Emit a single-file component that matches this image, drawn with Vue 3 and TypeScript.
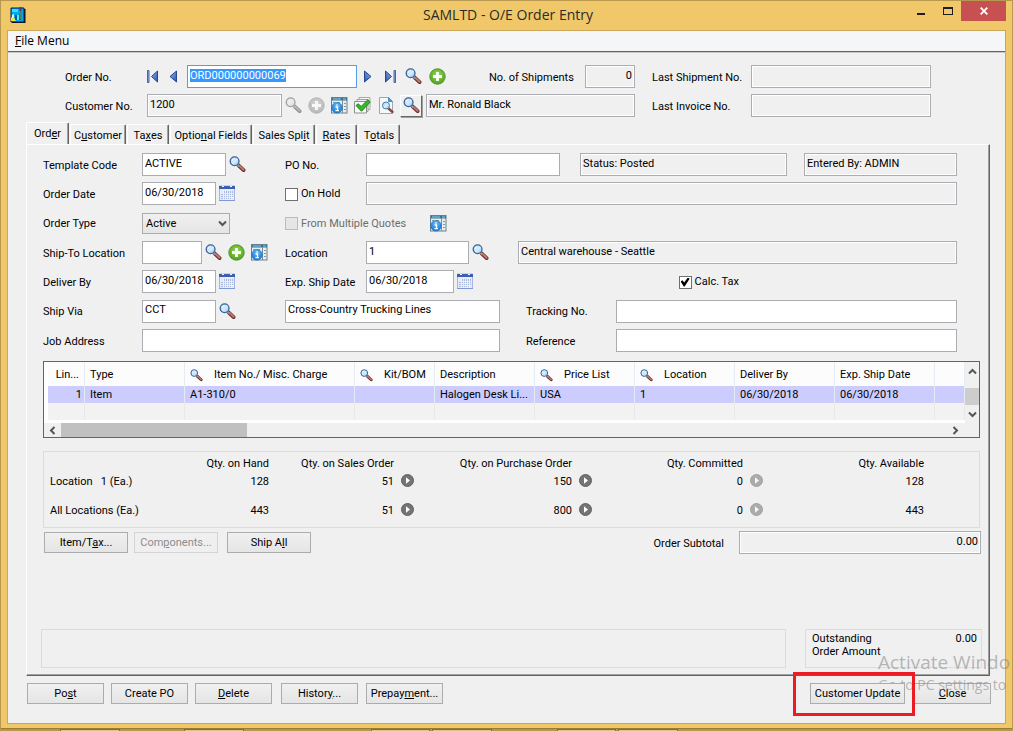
<script setup lang="ts">
import { onMounted, reactive, ref } from 'vue'

interface Tab {
  id: string
  pre: string
  key: string
  post: string
}

interface Column {
  title: string
  value: string
  width: string
  finder?: boolean
  align?: 'right'
}

interface QtyRow {
  label: string
  hand: string
  sales: string
  purchase: string
  committed: string
  available: string
}

const order = reactive({
  number: 'ORD000000000069',
  customer: '1200',
  customerName: 'Mr. Ronald Black',
  shipments: '0',
  lastShipment: '',
  lastInvoice: '',
  template: 'ACTIVE',
  po: '',
  status: 'Status: Posted',
  enteredBy: 'Entered By: ADMIN',
  date: '06/30/2018',
  onHold: false,
  holdReason: '',
  type: 'Active',
  multiQuotes: false,
  shipTo: '',
  location: '1',
  locationName: 'Central warehouse - Seattle',
  deliverBy: '06/30/2018',
  expShip: '06/30/2018',
  calcTax: true,
  shipVia: 'CCT',
  shipViaName: 'Cross-Country Trucking Lines',
  tracking: '',
  jobAddress: '',
  reference: '',
  subtotal: '0.00',
})

const tabs: Tab[] = [
  { id: 'order', pre: 'Ord', key: 'e', post: 'r' },
  { id: 'customer', pre: 'C', key: 'u', post: 'stomer' },
  { id: 'taxes', pre: 'Ta', key: 'x', post: 'es' },
  { id: 'optional', pre: 'Optio', key: 'n', post: 'al Fields' },
  { id: 'split', pre: 'Sales Spl', key: 'i', post: 't' },
  { id: 'rates', pre: '', key: 'R', post: 'ates' },
  { id: 'totals', pre: 'T', key: 'o', post: 'tals' },
]
const activeTab = ref('order')

const columns: Column[] = [
  { title: 'Lin...', value: '1', width: 'w-line', align: 'right' },
  { title: 'Type', value: 'Item', width: 'w-std' },
  { title: 'Item No./ Misc. Charge', value: 'A1-310/0', width: 'w-item', finder: true },
  { title: 'Kit/BOM', value: '', width: 'w-kit', finder: true },
  { title: 'Description', value: 'Halogen Desk Li...', width: 'w-std' },
  { title: 'Price List', value: 'USA', width: 'w-std', finder: true },
  { title: 'Location', value: '1', width: 'w-std', finder: true },
  { title: 'Deliver By', value: '06/30/2018', width: 'w-std' },
  { title: 'Exp. Ship Date', value: '06/30/2018', width: 'w-std' },
  { title: '', value: '', width: 'w-rest' },
]

const quantities: QtyRow[] = [
  { label: 'Location\u00a0\u00a0 1 (Ea.)', hand: '128', sales: '51', purchase: '150', committed: '0', available: '128' },
  { label: 'All Locations (Ea.)', hand: '443', sales: '51', purchase: '800', committed: '0', available: '443' },
]

const orderInput = ref<HTMLInputElement | null>(null)
onMounted(() => {
  orderInput.value?.focus()
  orderInput.value?.select()
})
</script>

<template>
  <div class="screen">
    <svg class="sprite" width="0" height="0" aria-hidden="true">
      <defs>
        <linearGradient id="g-lens" x1="0" y1="0" x2="1" y2="1">
          <stop offset="0" stop-color="#8fc4f2" /><stop offset="0.5" stop-color="#d8efff" /><stop offset="1" stop-color="#8cc0ee" />
        </linearGradient>
        <radialGradient id="g-green" cx="0.5" cy="0.4" r="0.6">
          <stop offset="0" stop-color="#9bdc58" /><stop offset="1" stop-color="#4ea21f" />
        </radialGradient>
        <linearGradient id="g-nav" x1="0" y1="0" x2="1" y2="1">
          <stop offset="0" stop-color="#8fb2ee" /><stop offset="1" stop-color="#2a55b0" />
        </linearGradient>
        <radialGradient id="g-info" cx="0.5" cy="0.3" r="0.7">
          <stop offset="0" stop-color="#6cc0fb" /><stop offset="1" stop-color="#0f74cf" />
        </radialGradient>
      </defs>
      <symbol id="i-find" viewBox="0 0 17 17">
        <path d="M9.8 9.6l4.800 4.500" stroke="#6a2f2a" stroke-width="3.800" stroke-linecap="round" />
        <path d="M10.600 10l4 3.800" stroke="#b87a72" stroke-width="2" stroke-linecap="round" />
        <path d="M8.2 8.2l2 2" stroke="#9a9aa2" stroke-width="2" />
        <circle cx="5.6" cy="5.3" r="4.4" fill="url(#g-lens)" stroke="#3a6299" stroke-width="1.3" />
        <path d="M2.9 5a2.8 2.8 0 0 1 2.6-2.4" stroke="#fff" stroke-width="1" fill="none" />
      </symbol>
      <symbol id="i-plus" viewBox="0 0 17 17">
        <circle cx="8.500" cy="8.500" r="7.700" fill="url(#g-green)" stroke="#4b9a24" />
        <path d="M8.500 4v9M4 8.500h9" stroke="#fff" stroke-width="2.800" />
      </symbol>
      <symbol id="i-info" viewBox="0 0 17 17">
        <rect x="0.5" y="0.5" width="15.500" height="15.500" fill="#e9edf0" stroke="#67808f" />
        <path d="M1 1h15v2.500H1z" fill="#39748f" />
        <path d="M2 2h8M12 2h3" stroke="#8ed0ee" />
        <path d="M2 5.500h2.500M6 5.500h3M2 7.500h2M13 6.500h2M13 9.500h2M13 12.500h2" stroke="#8c989f" />
        <path d="M11.500 3v13" stroke="#78909d" />
        <circle cx="6" cy="10.800" r="5.300" fill="url(#g-info)" stroke="#1b6fb8" stroke-width="0.600" />
        <path d="M6 7.200v1.600M4.600 10h1.900v3.500M4.400 13.600h3.600" stroke="#fff" stroke-width="1.300" fill="none" />
      </symbol>
      <symbol id="i-check" viewBox="0 0 17 17">
        <path d="M5 .500h11v12H5z" fill="#f7f7f7" stroke="#a7a7a7" />
        <path d="M3 2.500h11v12H3z" fill="#f2f2f2" stroke="#a0a0a0" />
        <path d="M.5 4.500h12v11.500H.5z" fill="#fafafa" stroke="#8e8e8e" />
        <path d="M2 8.500l2.200-1.700 3 2.600 6.700-6.700 2.300 2.400-8.700 9.200z" fill="#35b829" stroke="#14780e" stroke-width="0.900" />
      </symbol>
      <symbol id="i-doc" viewBox="0 0 17 17">
        <path d="M1.500.500h9l4 4v12h-13z" fill="#f6f9fc" stroke="#9aa9b8" />
        <path d="M10.500.500v4h4z" fill="#48a0e0" stroke="#3f8ccb" />
        <path d="M10.500 11.500l4 3.500" stroke="#85473f" stroke-width="2.400" stroke-linecap="round" />
        <circle cx="8" cy="8.500" r="3.500" fill="url(#g-lens)" stroke="#51799f" />
      </symbol>
      <symbol id="i-cal" viewBox="0 0 17 17">
        <path d="M.5 1h15v14.500H.5z" fill="#e3eafc" stroke="#a3b6e6" />
        <path d="M0 1h16v3H0z" fill="#3c5fb6" />
        <path d="M3 1.500h2M11 1.500h2" stroke="#fff" stroke-width="1" />
        <path d="M5 6h9v6h-2v2H2V8h3z" fill="#aab9dd" />
        <path d="M2 8.500h12M2 10.500h12M2 12.500h12M4.500 5v10M6.500 5v10M8.500 5v10M10.500 5v10M12.500 5v10" stroke="#f3f6ff" stroke-width="0.800" />
        <path d="M0 15.500h16" stroke="#7f97d4" />
      </symbol>
      <symbol id="i-prev" viewBox="0 0 13 13">
        <path d="M9.500 1v11L3 6.500z" fill="url(#g-nav)" stroke="#25478f" />
      </symbol>
      <symbol id="i-first" viewBox="0 0 13 13">
        <path d="M10.500 1v11L4.500 6.500z" fill="url(#g-nav)" stroke="#25478f" />
        <path d="M.5.500h1.500v12H.5z" fill="#9db9ec" stroke="#25478f" stroke-width="0.800" />
      </symbol>
      <symbol id="i-go" viewBox="0 0 13 13">
        <circle cx="6.500" cy="6.500" r="6" fill="#747474" stroke="#606060" />
        <path d="M5 3.200v6.600l4-3.300z" fill="#fff" />
      </symbol>
      <symbol id="i-chev" viewBox="0 0 9 9">
        <path d="M1 2.500l3.500 3.500L8 2.500" stroke="#555" stroke-width="2" fill="none" />
      </symbol>
    </svg>

    <header class="titlebar">
      <svg class="app-icon" viewBox="0 0 16 16" width="16" height="16" aria-hidden="true">
        <path d="M1 1h13v14H1z" fill="#00a8f0" stroke="#001a50" />
        <path d="M14 2h1.500v14H2v-1h12z" fill="#06142c" />
        <path d="M2 2h6v3H2z" fill="#29e0ff" />
        <path d="M5 8h2v5H5zM9 7h2v6H9z" fill="#0757c8" />
        <path d="M7 8h2v5H7z" fill="#65e7f6" />
        <path d="M1 11l2-2 3 5H1z" fill="#f5e53c" />
        <path d="M2 8l2-1v3l-2 1z" fill="#fff" />
        <path d="M9.500 0h2v4h-2z" fill="#62307c" />
        <path d="M9.500 4h2v8h-2z" fill="#3d8f50" />
      </svg>
      <h1>SAMLTD - O/E Order Entry</h1>
      <div class="win-buttons">
        <button type="button" class="win-btn" aria-label="Minimize">
          <svg width="10" height="10" viewBox="0 0 10 10"><path d="M1 7h8v2H1z" fill="#1e1e1e" /></svg>
        </button>
        <button type="button" class="win-btn" aria-label="Maximize">
          <svg width="10" height="8" viewBox="0 0 10 8"><path d="M0 0h10v8H0zM1 2v5h8V2z" fill="#1e1e1e" fill-rule="evenodd" /></svg>
        </button>
        <button type="button" class="win-btn close" aria-label="Close window">
          <svg width="8" height="8" viewBox="0 0 8 8"><path d="M.7.700l6.600 6.600M7.300.700L.7 7.300" stroke="#fff" stroke-width="1.800" /></svg>
        </button>
      </div>
    </header>

    <main class="client">
      <nav class="menubar"><button type="button"><u>F</u>ile Menu</button></nav>

      <section class="head">
        <div class="line">
          <label class="w82" for="ordno">Order No.</label>
          <button type="button" class="ico n20" aria-label="First"><svg width="13" height="13"><use href="#i-first" /></svg></button>
          <button type="button" class="ico n20" aria-label="Previous"><svg width="13" height="13"><use href="#i-prev" /></svg></button>
          <input id="ordno" ref="orderInput" v-model="order.number" class="field w170 current" />
          <button type="button" class="ico flip" aria-label="Next"><svg width="13" height="13"><use href="#i-prev" /></svg></button>
          <button type="button" class="ico flip" aria-label="Last"><svg width="13" height="13"><use href="#i-first" /></svg></button>
          <button type="button" class="ico n24" aria-label="Find order"><svg width="17" height="17"><use href="#i-find" /></svg></button>
          <button type="button" class="ico n24" aria-label="New order"><svg width="17" height="17"><use href="#i-plus" /></svg></button>
          <label class="ship-label" for="ships">No. of Shipments</label>
          <input id="ships" v-model="order.shipments" class="field ro w50 num" readonly />
          <label class="last-label" for="lastship">Last Shipment No.</label>
          <input id="lastship" v-model="order.lastShipment" class="field ro grow" readonly />
        </div>
        <div class="line">
          <label class="w82" for="custno">Customer No.</label>
          <input id="custno" v-model="order.customer" class="field ro w135" readonly />
          <button type="button" class="ico off" aria-label="Find customer" disabled><svg width="17" height="17"><use href="#i-find" /></svg></button>
          <button type="button" class="ico n24 off" aria-label="New customer" disabled><svg width="17" height="17"><use href="#i-plus" /></svg></button>
          <button type="button" class="ico" aria-label="Customer details"><svg width="17" height="17"><use href="#i-info" /></svg></button>
          <button type="button" class="ico n24" aria-label="Credit check"><svg width="17" height="17"><use href="#i-check" /></svg></button>
          <button type="button" class="ico n24" aria-label="Inquiry"><svg width="17" height="17"><use href="#i-doc" /></svg></button>
          <button type="button" class="ico raised" aria-label="Find by name"><svg width="17" height="17"><use href="#i-find" /></svg></button>
          <input v-model="order.customerName" class="field ro cust-name" aria-label="Customer name" readonly />
          <label class="last-label" for="lastinv">Last Invoice No.</label>
          <input id="lastinv" v-model="order.lastInvoice" class="field ro grow" readonly />
        </div>
      </section>

      <div class="tabs" role="tablist">
        <button
          v-for="t in tabs" :key="t.id" type="button" role="tab" class="tab"
          :class="[t.id, { active: t.id === activeTab }]" :aria-selected="t.id === activeTab" @click="activeTab = t.id"
        >{{ t.pre }}<u>{{ t.key }}</u>{{ t.post }}</button>
      </div>

      <section class="panel" role="tabpanel">
        <div class="form">
          <div class="line">
            <div class="col-a">
              <label class="w99" for="tpl">Template Code</label>
              <input id="tpl" v-model="order.template" class="field w84" />
              <button type="button" class="ico" aria-label="Find template"><svg width="17" height="17"><use href="#i-find" /></svg></button>
            </div>
            <label class="w81" for="po">PO No.</label>
            <input id="po" v-model="order.po" class="field w194" />
            <input v-model="order.status" class="field ro status" aria-label="Status" readonly />
            <input v-model="order.enteredBy" class="field ro grow" aria-label="Entered by" readonly />
          </div>
          <div class="line">
            <div class="col-a">
              <label class="w99" for="odate">Order Date</label>
              <input id="odate" v-model="order.date" class="field w74" />
              <button type="button" class="ico" aria-label="Pick order date"><svg width="17" height="17"><use href="#i-cal" /></svg></button>
            </div>
            <label class="tick w81"><input v-model="order.onHold" type="checkbox" />On Hold</label>
            <input v-model="order.holdReason" class="field ro grow" aria-label="Hold reason" readonly />
          </div>
          <div class="line">
            <div class="col-a">
              <label class="w99" for="otype">Order Type</label>
              <span class="drop">
                <select id="otype" v-model="order.type">
                  <option>Active</option>
                  <option>Future</option>
                  <option>Standing</option>
                  <option>Quote</option>
                </select>
                <svg width="9" height="9" aria-hidden="true"><use href="#i-chev" /></svg>
              </span>
            </div>
            <label class="tick w142 dim"><input v-model="order.multiQuotes" type="checkbox" disabled />From Multiple Quotes</label>
            <button type="button" class="ico" aria-label="Quote details"><svg width="17" height="17"><use href="#i-info" /></svg></button>
          </div>
          <div class="line">
            <div class="col-a">
              <label class="w99" for="shipto">Ship-To Location</label>
              <input id="shipto" v-model="order.shipTo" class="field w60" />
              <button type="button" class="ico" aria-label="Find ship-to"><svg width="17" height="17"><use href="#i-find" /></svg></button>
              <button type="button" class="ico n24" aria-label="New ship-to"><svg width="17" height="17"><use href="#i-plus" /></svg></button>
              <button type="button" class="ico" aria-label="Ship-to details"><svg width="17" height="17"><use href="#i-info" /></svg></button>
            </div>
            <label class="w81" for="loc">Location</label>
            <input id="loc" v-model="order.location" class="field w103" />
            <button type="button" class="ico" aria-label="Find location"><svg width="17" height="17"><use href="#i-find" /></svg></button>
            <input v-model="order.locationName" class="field ro grow loc-name" aria-label="Location name" readonly />
          </div>
          <div class="line">
            <div class="col-a">
              <label class="w99" for="deliver">Deliver By</label>
              <input id="deliver" v-model="order.deliverBy" class="field w74" />
              <button type="button" class="ico" aria-label="Pick delivery date"><svg width="17" height="17"><use href="#i-cal" /></svg></button>
            </div>
            <label class="w81" for="exp">Exp. Ship Date</label>
            <input id="exp" v-model="order.expShip" class="field w88" />
            <button type="button" class="ico" aria-label="Pick ship date"><svg width="17" height="17"><use href="#i-cal" /></svg></button>
            <label class="tick calc"><input v-model="order.calcTax" type="checkbox" />Calc. Tax</label>
          </div>
          <div class="line">
            <div class="col-a">
              <label class="w99" for="via">Ship Via</label>
              <input id="via" v-model="order.shipVia" class="field w74" />
              <button type="button" class="ico" aria-label="Find carrier"><svg width="17" height="17"><use href="#i-find" /></svg></button>
            </div>
            <input v-model="order.shipViaName" class="field w215" aria-label="Carrier name" />
            <label class="side-label" for="track">Tracking No.</label>
            <input id="track" v-model="order.tracking" class="field grow" />
          </div>
          <div class="line">
            <label class="w99" for="job">Job Address</label>
            <input id="job" v-model="order.jobAddress" class="field w358" />
            <label class="side-label" for="refr">Reference</label>
            <input id="refr" v-model="order.reference" class="field grow" />
          </div>
        </div>

        <div class="grid">
          <div class="grid-main">
            <table>
              <colgroup>
                <col class="w-gutter" />
                <col v-for="(c, i) in columns" :key="i" :class="c.width" />
              </colgroup>
              <thead>
                <tr>
                  <th class="gutter"></th>
                  <th v-for="(c, i) in columns" :key="i" :class="{ right: c.align, finder: c.finder }">
                    <span v-if="c.finder" class="find-head"><svg width="13" height="13" aria-hidden="true"><use href="#i-find" /></svg><span>{{ c.title }}</span></span>
                    <template v-else>{{ c.title }}</template>
                  </th>
                </tr>
              </thead>
              <tbody>
                <tr class="selected">
                  <td class="gutter"></td>
                  <td v-for="(c, i) in columns" :key="i" :class="{ right: c.align }">{{ c.value }}</td>
                </tr>
                <tr class="blank">
                  <td class="gutter"></td>
                  <td v-for="(c, i) in columns" :key="i"></td>
                </tr>
              </tbody>
            </table>
            <div class="vbar">
              <button type="button" aria-label="Scroll up"><svg class="up" width="9" height="9"><use href="#i-chev" /></svg></button>
              <span class="vthumb"></span>
              <button type="button" aria-label="Scroll down"><svg width="9" height="9"><use href="#i-chev" /></svg></button>
            </div>
          </div>
          <div class="hbar">
            <button type="button" aria-label="Scroll left"><svg class="left" width="9" height="9"><use href="#i-chev" /></svg></button>
            <span class="track"><span class="hthumb"></span></span>
            <button type="button" aria-label="Scroll right"><svg class="rightward" width="9" height="9"><use href="#i-chev" /></svg></button>
          </div>
        </div>

        <div class="qty">
          <table>
            <colgroup>
              <col class="q-label" /><col class="q-hand" /><col class="q-sales" /><col class="q-go" /><col class="q-po" /><col class="q-go" /><col class="q-com" /><col class="q-go" /><col />
            </colgroup>
            <thead>
              <tr>
                <th></th><th>Qty. on Hand</th><th>Qty. on Sales Order</th><th></th><th>Qty. on Purchase Order</th><th></th><th>Qty. Committed</th><th></th><th class="avail">Qty. Available</th>
              </tr>
            </thead>
            <tbody>
              <tr v-for="q in quantities" :key="q.label">
                <th scope="row">{{ q.label }}</th>
                <td>{{ q.hand }}</td>
                <td>{{ q.sales }}</td>
                <td class="go"><button type="button" aria-label="Sales order detail"><svg width="13" height="13"><use href="#i-go" /></svg></button></td>
                <td>{{ q.purchase }}</td>
                <td class="go"><button type="button" aria-label="Purchase order detail"><svg width="13" height="13"><use href="#i-go" /></svg></button></td>
                <td>{{ q.committed }}</td>
                <td class="go faint"><button type="button" aria-label="Committed detail" disabled><svg width="13" height="13"><use href="#i-go" /></svg></button></td>
                <td class="avail">{{ q.available }}</td>
              </tr>
            </tbody>
          </table>
        </div>

        <div class="actions">
          <div class="pair">
            <button type="button" class="btn w84">Item/T<u>a</u>x...</button>
            <button type="button" class="btn w84" disabled>Com<u>p</u>onents...</button>
          </div>
          <button type="button" class="btn w84">Ship A<u>l</u>l</button>
          <label class="sub-label" for="subtotal">Order Subtotal</label>
          <input id="subtotal" v-model="order.subtotal" class="field ro num subtotal" readonly />
        </div>

        <div class="summary">
          <div class="message"></div>
          <div class="outstanding"><span>Outstanding<br />Order Amount</span><span class="amount">0.00</span></div>
        </div>
      </section>

      <footer class="foot">
        <div class="set tight">
          <button type="button" class="btn w77">Po<u>s</u>t</button>
          <button type="button" class="btn w77">Create PO</button>
          <button type="button" class="btn w77"><u>D</u>elete</button>
        </div>
        <div class="set">
          <button type="button" class="btn w77">Histor<u>y</u>...</button>
          <button type="button" class="btn w77">Prepay<u>m</u>ent...</button>
        </div>
        <div class="set end">
          <div class="marked"><button type="button" class="btn w95">Customer Update</button></div>
          <button type="button" class="btn w77"><u>C</u>lose</button>
        </div>
      </footer>
    </main>

    <div class="frame"></div>
    <div class="taskbar"><i></i><i></i><i></i><i></i><i></i><i></i></div>
    <div class="watermark" aria-hidden="true"><strong>Activate Windo</strong><span>Go to PC settings to</span></div>
  </div>
</template>

<style>
html,
body {
  background: #f0c869;
}
</style>

<style scoped>
.screen {
  position: relative;
  display: flex;
  flex-direction: column;
  box-sizing: border-box;
  min-width: 1013px;
  min-height: 100vh;
  overflow: hidden;
  background: #f0c869;
  border-top: 1px solid #b8984f;
  border-left: 1px solid #b8984f;
  border-right: 1px solid #b8984f;
  font-family: Roboto, "Liberation Sans", Arial, sans-serif;
  font-size: 11px;
  line-height: 14px;
  color: #000;
}
.screen *,
.screen *::before {
  box-sizing: border-box;
}
.sprite {
  display: block;
}
.screen svg {
  flex: none;
}
button,
input,
select {
  font: inherit;
  color: inherit;
  margin: 0;
}
button {
  padding: 0;
  background: none;
  border: 0;
}
u {
  text-decoration: underline;
  text-underline-offset: 1px;
}

.titlebar {
  display: grid;
  grid-template-columns: 1fr auto 1fr;
  height: 29px;
  padding: 0 6px 0 9px;
}
.app-icon {
  margin-top: 6px;
}
h1 {
  margin: 0;
  font: 400 14px/28px "Open Sans", "Noto Sans", sans-serif;
  color: #2b2b2b;
}
.win-buttons {
  display: flex;
  justify-content: flex-end;
}
.win-btn {
  display: flex;
  align-items: center;
  justify-content: center;
  width: 27px;
  height: 20px;
}
.win-btn.close {
  width: 45px;
  background: #c75050;
}

.client {
  flex: 1;
  display: flex;
  flex-direction: column;
  margin: 0 6px;
  background: #f0f0f0;
  border: 1px solid #cba65a;
}
.menubar {
  height: 21px;
  background: #f5f6f7;
  border-bottom: 1px solid #646464;
  box-shadow: 0 1px #c8c8c8;
}
.menubar button {
  padding: 0 7px;
  font: 12px/19px "Open Sans", "Noto Sans", sans-serif;
}

.head {
  display: grid;
  gap: 6px;
  padding: 13px 74px 0 57px;
}
.line,
.col-a {
  display: flex;
  align-items: center;
}
.col-a {
  flex: 0 0 242px;
}
label {
  flex: none;
  padding-top: 2px;
  white-space: nowrap;
}
.field {
  flex: none;
  min-width: 0;
  height: 23px;
  padding: 0 2px 3px;
  background: #fff;
  border: 1px solid #abadb3;
  border-radius: 0;
  outline: 0;
}
.field.ro {
  background: #f0f0f0;
  box-shadow: inset 0 0 0 1px #fff;
}
.field.current {
  border-color: #569de5;
}
.field::selection {
  background: #3399ff;
  color: #fff;
}
.num {
  text-align: right;
}
.field.grow {
  flex: 1;
  width: 0;
}
.w50 { width: 50px; }
.w60 { width: 60px; }
.w74 { width: 74px; }
.w77 { width: 77px; }
.w81 { width: 81px; }
.w82 { width: 82px; }
.w84 { width: 84px; }
.w88 { width: 88px; }
.w95 { width: 95px; }
.w99 { width: 99px; }
.w103 { width: 103px; }
.w135 { width: 135px; }
.w142 { width: 142px; }
.w170 { width: 170px; }
.w194 { width: 194px; }
.w215 { width: 215px; }
.w358 { width: 358px; }

.ico {
  display: flex;
  flex: none;
  align-items: center;
  justify-content: center;
  width: 22px;
  height: 22px;
}
.ico.n20 {
  width: 20px;
  justify-content: flex-start;
}
.ico.n24 {
  width: 24px;
}
.ico.flip {
  transform: scaleX(-1);
}
.ico.off {
  filter: grayscale(1) opacity(0.55);
}
.ico.raised {
  margin-left: 2px;
  border: 1px solid;
  border-color: #fff #696969 #696969 #fff;
  box-shadow: 1px 1px #a0a0a0;
}
.ship-label {
  width: 136px;
  padding-left: 40px;
}
.last-label {
  width: 116px;
  padding-left: 17px;
}
.cust-name {
  width: 209px;
  margin-left: 4px;
}

.tabs {
  display: flex;
  align-items: flex-end;
  gap: 1px;
  height: 27px;
  padding: 0 18px;
}
.tab {
  height: 20px;
  padding-top: 2px;
  border-top: 1px solid #fff;
  border-left: 1px solid #fff;
  border-right: 1px solid #646464;
  border-radius: 2px 2px 0 0;
  box-shadow: inset -1px 0 #a0a0a0;
  white-space: nowrap;
}
.tab.active {
  height: 23px;
  margin-bottom: -1px;
  padding-bottom: 2px;
  background: #f0f0f0;
}
.tab.order { width: 43px; }
.tab.customer { width: 56px; }
.tab.taxes { width: 42px; }
.tab.optional { width: 82px; }
.tab.split { width: 62px; }
.tab.rates { width: 41px; }
.tab.totals { width: 42px; }

.panel {
  flex: 1;
  display: flex;
  flex-direction: column;
  margin: 0 15px 0 18px;
  padding: 8px 9px 7px 16px;
  border-top: 1px solid #fff;
  border-left: 1px solid #fff;
  border-right: 1px solid #646464;
  border-bottom: 1px solid #646464;
  box-shadow: inset -1px -1px #a0a0a0;
}
.form {
  display: grid;
  grid-template-rows: 23px 23px 24px 23px 23px 24px 23px;
  row-gap: 6px;
  padding-right: 23px;
}
.status {
  width: 207px;
  margin: 0 17px 0 20px;
}
.loc-name {
  margin-left: 27px;
}
.side-label {
  width: 116px;
  padding-left: 26px;
}
.tick {
  display: flex;
  align-items: center;
  gap: 3px;
  padding-top: 1px;
}
.tick input {
  appearance: none;
  display: grid;
  place-items: center;
  width: 13px;
  height: 13px;
  background: #fff;
  border: 1px solid #707070;
}
.tick input:checked::before {
  content: "";
  width: 9px;
  height: 9px;
  background: #000;
  clip-path: polygon(0 45%, 20% 30%, 40% 55%, 80% 0, 100% 15%, 45% 100%, 35% 100%);
}
.tick input:disabled {
  background: #e6e6e6;
  border-color: #bcbcbc;
}
.dim {
  color: #6d6d6d;
}
.calc {
  margin: 0 218px 0 auto;
}
.drop {
  position: relative;
  display: block;
  width: 88px;
}
.drop select {
  appearance: none;
  display: block;
  width: 100%;
  height: 21px;
  padding: 1px 3px 0;
  background: linear-gradient(#f0f0f0, #e5e5e5);
  border: 1px solid #acacac;
  border-radius: 0;
}
.drop svg {
  position: absolute;
  right: 3px;
  top: 6px;
  pointer-events: none;
}

.grid {
  margin-top: 9px;
  border: 1px solid #646464;
  background: #fff;
}
.grid-main {
  display: flex;
  height: 61px;
}
.grid table {
  flex: 1;
  width: 0;
  height: 58px;
  table-layout: fixed;
  border-collapse: separate;
  border-spacing: 0;
}
.grid th,
.grid td {
  padding: 0 0 0 5px;
  overflow: hidden;
  white-space: nowrap;
  text-align: left;
  font-weight: 400;
  border-right: 1px solid #e6ecf5;
}
.grid th {
  height: 24px;
  padding-top: 2px;
  background: #fcfcfc;
}
.grid td {
  height: 17px;
}
.grid .selected td {
  background: #ccccff;
}
.grid .blank td {
  background: #f2f2f2;
  border-color: #e8e8e8;
}
.grid .gutter,
.grid .selected .gutter,
.grid .blank .gutter {
  padding: 0;
  background: #fff;
  border: 0;
}
.grid td.right {
  padding: 0 2px 0 0;
  text-align: right;
}
.grid th.right {
  padding: 2px 5px 0 0;
  text-align: right;
}
.w-gutter { width: 4px; }
.w-line { width: 37px; }
.w-std { width: 100px; }
.w-item { width: 170px; }
.w-kit { width: 80px; }
.find-head {
  display: flex;
  align-items: center;
  gap: 11px;
}
.vbar {
  display: flex;
  flex-direction: column;
  justify-content: space-between;
  width: 14px;
  background: #f0f0f0;
}
.vbar button,
.hbar button {
  display: flex;
  align-items: center;
  justify-content: center;
  width: 14px;
  height: 18px;
}
.vthumb {
  height: 17px;
  margin-top: 8px;
  background: #cdcdcd;
}
.hbar {
  display: flex;
  height: 14px;
  padding-right: 15px;
  background: #f0f0f0;
}
.hbar button {
  width: 17px;
  height: 14px;
}
.track {
  display: flex;
  flex: 1;
}
.hthumb {
  width: 21%;
  background: #c0c0c0;
}
.up { transform: rotate(180deg); }
.left { transform: rotate(90deg); }
.rightward { transform: rotate(-90deg); }

.qty {
  margin-top: 13px;
  padding: 2px 0 9px;
  border: 1px solid #dcdcdc;
}
.qty table {
  width: 100%;
  table-layout: fixed;
  border-spacing: 0;
}
.qty th,
.qty td {
  height: 16px;
  padding: 0;
  text-align: right;
  vertical-align: bottom;
  font-weight: 400;
  white-space: nowrap;
}
.qty thead th {
  height: 19px;
  padding-bottom: 2px;
}
.qty tbody th {
  padding-left: 6px;
  text-align: left;
}
.qty tbody tr + tr > * {
  height: 29px;
}
.qty .go {
  padding: 0 0 2px 7px;
  text-align: left;
}
.qty .go button,
.qty .go svg {
  display: block;
}
.qty .faint {
  opacity: 0.55;
}
.qty .avail {
  padding-right: 55px;
}
.q-label { width: 150px; }
.q-hand { width: 75px; }
.q-sales { width: 125px; }
.q-go { width: 29px; }
.q-po { width: 149px; }
.q-com { width: 142px; }

.btn {
  flex: none;
  height: 21px;
  padding: 0;
  background: linear-gradient(#f0f0f0, #e5e5e5);
  border: 1px solid #acacac;
  white-space: nowrap;
}
.btn:disabled {
  color: #8d8d8d;
  background: #efefef;
  border-color: #d4d4d4;
}
.actions {
  display: flex;
  align-items: center;
  gap: 9px;
  margin: 3px -1px 0 0;
  padding-left: 1px;
}
.pair {
  display: flex;
  gap: 6px;
}
.sub-label {
  margin-left: auto;
  padding-right: 6px;
}
.subtotal {
  width: 242px;
}
.summary {
  display: flex;
  gap: 19px;
  margin: auto -2px 0;
}
.message,
.outstanding {
  height: 39px;
  border: 1px solid #dcdcdc;
}
.message {
  flex: 1;
}
.outstanding {
  display: flex;
  justify-content: space-between;
  width: 177px;
  padding: 2px 4px 0 6px;
  line-height: 13px;
}

.foot {
  display: flex;
  align-items: center;
  gap: 9px;
  padding: 7px 14px 19px 19px;
}
.set {
  display: flex;
  gap: 8px;
}
.set.tight {
  gap: 7px;
}
.set.end {
  gap: 9px;
  margin-left: auto;
}
.marked {
  position: relative;
  z-index: 3;
}
.marked::after {
  content: "";
  position: absolute;
  inset: -11px -10px -12px -17px;
  border: 3px solid #ed1c24;
  pointer-events: none;
}

.frame {
  height: 4px;
}
.taskbar {
  display: grid;
  grid-template-columns: 60px 60px 59px 60px 59px 60px;
  column-gap: 64px;
  height: 3px;
  padding-left: 59px;
  overflow: hidden;
  background: #b8964b;
  border-top: 1px solid #9a7b35;
}
.taskbar {
  grid-template-columns: 60px 64px 60px 127px 59px 2px 60px 65px 59px 2px 60px;
  column-gap: 0;
}
.taskbar i {
  grid-row: 1;
  background: #dcc68c;
  border: 1px solid #8a6d2c;
  border-bottom: 0;
}
.taskbar i:nth-child(1) { grid-column: 1; }
.taskbar i:nth-child(2) { grid-column: 3; }
.taskbar i:nth-child(3) { grid-column: 5; }
.taskbar i:nth-child(4) { grid-column: 7; }
.taskbar i:nth-child(5) { grid-column: 9; }
.taskbar i:nth-child(6) { grid-column: 11; }
.watermark {
  position: absolute;
  left: 877px;
  bottom: 36px;
  z-index: 2;
  display: grid;
  gap: 1px;
  white-space: nowrap;
  font-family: "Open Sans", "Noto Sans", sans-serif;
  color: rgba(130, 130, 130, 0.55);
  pointer-events: none;
}
.watermark strong {
  font: 400 19px/24px "Open Sans", "Noto Sans", sans-serif;
}
.watermark span {
  font-size: 14px;
  line-height: 20px;
}
</style>
